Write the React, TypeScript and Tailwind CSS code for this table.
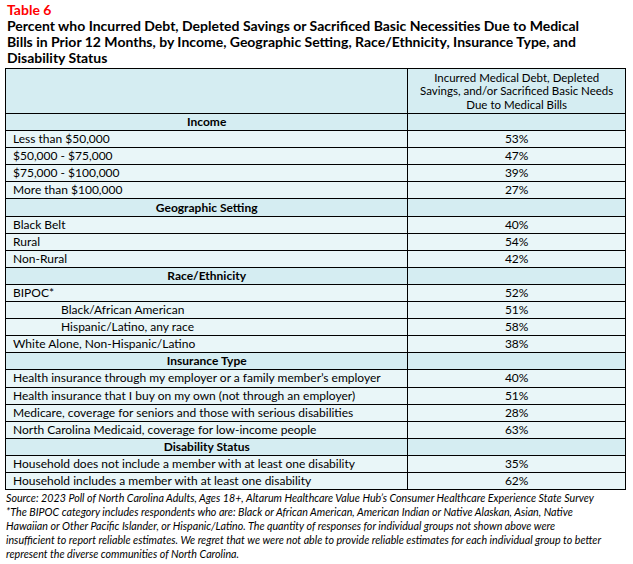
const sections: { title: string; rows: { label: string; value: string; indent?: boolean }[] }[] = [
  {
    title: "Income",
    rows: [
      { label: "Less than $50,000", value: "53%" },
      { label: "$50,000 - $75,000", value: "47%" },
      { label: "$75,000 - $100,000", value: "39%" },
      { label: "More than $100,000", value: "27%" },
    ],
  },
  {
    title: "Geographic Setting",
    rows: [
      { label: "Black Belt", value: "40%" },
      { label: "Rural", value: "54%" },
      { label: "Non-Rural", value: "42%" },
    ],
  },
  {
    title: "Race/Ethnicity",
    rows: [
      { label: "BIPOC*", value: "52%" },
      { label: "Black/African American", value: "51%", indent: true },
      { label: "Hispanic/Latino, any race", value: "58%", indent: true },
      { label: "White Alone, Non-Hispanic/Latino", value: "38%" },
    ],
  },
  {
    title: "Insurance Type",
    rows: [
      { label: "Health insurance through my employer or a family member’s employer", value: "40%" },
      { label: "Health insurance that I buy on my own (not through an employer)", value: "51%" },
      { label: "Medicare, coverage for seniors and those with serious disabilities", value: "28%" },
      { label: "North Carolina Medicaid, coverage for low-income people", value: "63%" },
    ],
  },
  {
    title: "Disability Status",
    rows: [
      { label: "Household does not include a member with at least one disability", value: "35%" },
      { label: "Household includes a member with at least one disability", value: "62%" },
    ],
  },
];

const notes = [
  "Source: 2023 Poll of North Carolina Adults, Ages 18+, Altarum Healthcare Value Hub’s Consumer Healthcare Experience State Survey",
  "*The BIPOC category includes respondents who are: Black or African American, American Indian or Native Alaskan, Asian, Native",
  "Hawaiian or Other Pacific Islander, or Hispanic/Latino. The quantity of responses for individual groups not shown above were",
  "insufficient to report reliable estimates. We regret that we were not able to provide reliable estimates for each individual group to better",
  "represent the diverse communities of North Carolina.",
];

export default function App() {
  return (
    <div
      className="w-[633px] h-[564px] bg-white text-black overflow-hidden"
      style={{ fontFamily: "Lato, 'Open Sans', sans-serif" }}
    >
      <div className="pl-[7px] pt-[2px] text-[14px] leading-[16px] font-bold">
        <div className="text-[#ff0000]">Table 6</div>
        <div className="pr-[30px]">
          Percent who Incurred Debt, Depleted Savings or Sacrificed Basic Necessities Due to Medical Bills in
          Prior 12 Months, by Income, Geographic Setting, Race/Ethnicity, Insurance Type, and Disability Status
        </div>
      </div>
      <table className="ml-[5px] mt-[2px] w-[621px] border-collapse text-[12px] leading-[14px]">
        <colgroup>
          <col className="w-[403px]" />
          <col className="w-[218px]" />
        </colgroup>
        <thead>
          <tr className="bg-[#d5edf2]">
            <th className="border border-black h-[45px]"></th>
            <th className="border border-black h-[45px] px-2 font-normal text-[11.5px] leading-[13.5px] text-center">
              Incurred Medical Debt, Depleted Savings, and/or Sacrificed Basic Needs Due to Medical Bills
            </th>
          </tr>
        </thead>
        <tbody>
          {sections.map((s) => (
            <>
              <tr key={s.title} className="bg-[#d5edf2]">
                <td className="border border-black h-[17.1px] p-0 text-center font-bold">{s.title}</td>
                <td className="border border-black h-[17.1px] p-0"></td>
              </tr>
              {s.rows.map((r) => (
                <tr key={r.label} className="bg-[#e9f6f8]">
                  <td className={`border border-black h-[17.1px] p-0 ${r.indent ? "pl-[55px]" : "pl-[7px]"}`}>
                    {r.label}
                  </td>
                  <td className="border border-black h-[17.1px] p-0 text-center">{r.value}</td>
                </tr>
              ))}
            </>
          ))}
        </tbody>
      </table>
      <div className="pl-[6px] pt-[1px] text-[10.7px] leading-[14px] italic whitespace-nowrap">
        {notes.map((n) => (
          <div key={n}>{n}</div>
        ))}
      </div>
    </div>
  );
}
